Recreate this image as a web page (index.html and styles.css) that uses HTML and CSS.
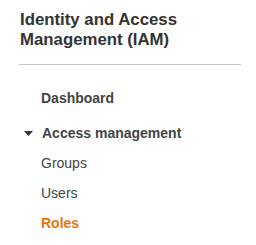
FILE: index.html
```html
<!DOCTYPE html>
<html>
<head>
<meta charset="utf-8">
<link rel="stylesheet" href="styles.css">
</head>
<body>
<nav class="sidenav">
  <h2 class="title">Identity and Access Management (IAM)</h2>
  <hr class="divider">
  <ul class="menu">
    <li class="item item-top">Dashboard</li>
    <li class="section">
      <div class="section-head">
        <svg class="caret" width="9" height="5" viewBox="0 0 9 5"><path d="M0 0H9L4.5 5Z" fill="#333"/></svg>
        <span>Access management</span>
      </div>
      <ul class="submenu">
        <li class="item">Groups</li>
        <li class="item">Users</li>
        <li class="item active">Roles</li>
      </ul>
    </li>
  </ul>
</nav>
</body>
</html>
```
FILE: styles.css
```css
html, body {
  margin: 0;
  padding: 0;
  background: #fff;
}
body {
  font-family: "Liberation Sans", Arial, sans-serif;
  color: #444;
}
.sidenav {
  width: 256px;
}
.title {
  margin: 10px 0 0 20px;
  width: 200px;
  font-size: 16.8px;
  line-height: 20px;
  font-weight: bold;
  color: #333;
}
.divider {
  margin: 14px 15px 0 19px;
  border: 0;
  border-top: 1px solid #c4c4c4;
  height: 0;
}
.menu, .submenu {
  list-style: none;
  margin: 0;
  padding: 0;
}
.menu {
  margin-top: 23px;
  display: flex;
  flex-direction: column;
  gap: 15px;
}
.item {
  font-size: 14px;
  line-height: 20px;
  padding-left: 41px;
  color: #444;
}
.item-top {
  font-weight: bold;
}
.section-head {
  display: flex;
  align-items: center;
  font-size: 14px;
  line-height: 20px;
  font-weight: bold;
  padding-left: 24px;
  gap: 9px;
}
.caret {
  display: block;
  margin-top: 1px;
}
.submenu {
  margin-top: 10px;
  display: flex;
  flex-direction: column;
  gap: 10px;
}
.active {
  color: #ec7211;
  font-weight: bold;
}
```
